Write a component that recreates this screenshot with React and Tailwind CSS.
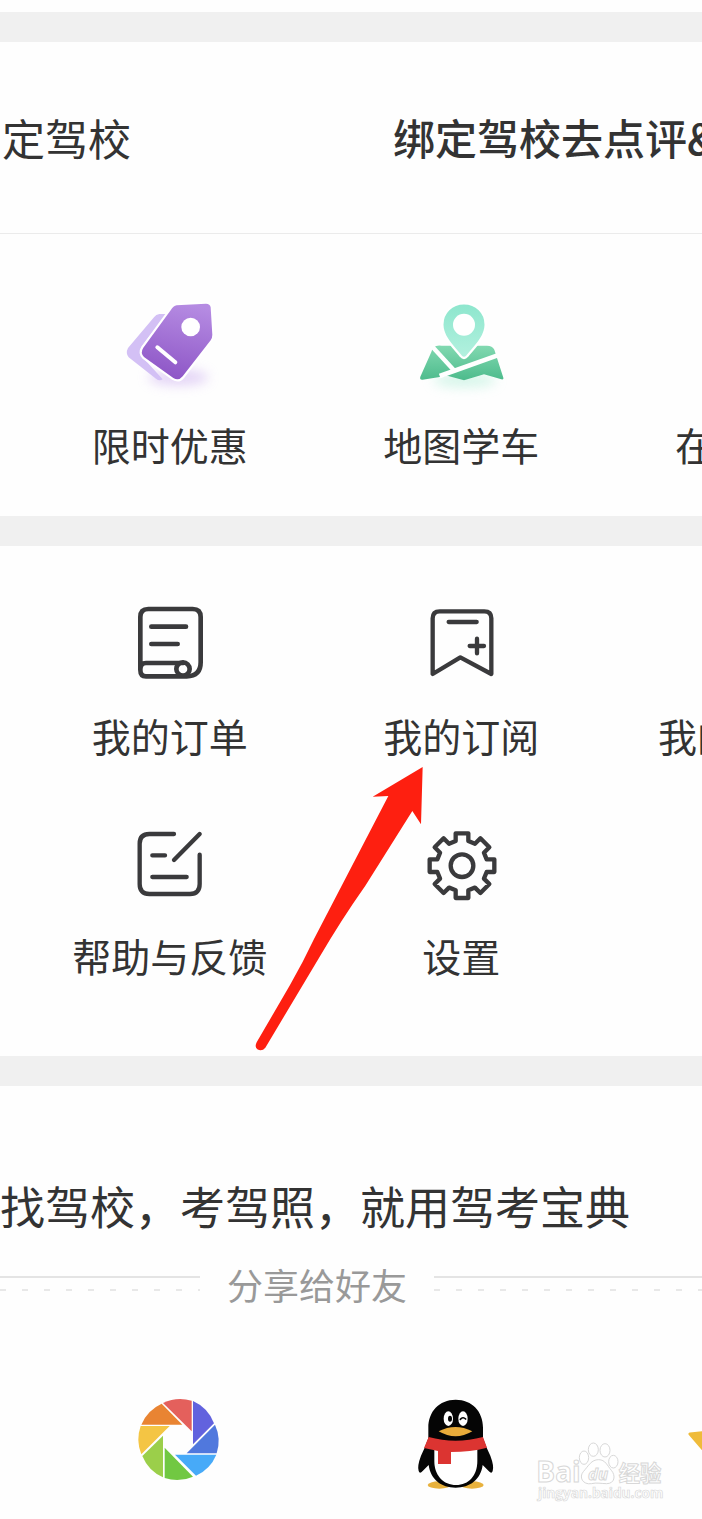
import React from 'react';

const LINE_ICON = 'h-24 w-[100px] fill-none stroke-[#3a3a3c]';

const TagIcon = () => (
  <svg viewBox="0 0 360 330" className="h-[110px] w-[120px]" aria-hidden="true">
    <defs>
      <linearGradient id="tagFill" x1="0.6" y1="0" x2="0.4" y2="1">
        <stop offset="0" stopColor="#b58be2" />
        <stop offset="1" stopColor="#8d55c6" />
      </linearGradient>
      <filter id="tagBlur" x="-50%" y="-150%" width="200%" height="400%">
        <feGaussianBlur stdDeviation="18" />
      </filter>
    </defs>
    <ellipse cx="205" cy="262" rx="90" ry="24" fill="#d5bdf2" opacity="0.65" filter="url(#tagBlur)" />
    <path d="M148 72h22L96 168q-12 18 2 34l60 66q-10 6-20-2L56 202q-10-12-2-28L132 82q6-9 16-10z" fill="#d3c0f5" />
    <path
      d="M200 46l88-5q12 0 14 11l5 82q0 9-5 17l-84 108q-12 15-28 5L102 201q-12-13-2-28l82-112q8-13 18-15z"
      fill="url(#tagFill)"
      stroke="#fff"
      strokeWidth="13"
    />
    <path
      d="M200 46l88-5q12 0 14 11l5 82q0 9-5 17l-84 108q-12 15-28 5L102 201q-12-13-2-28l82-112q8-13 18-15z"
      fill="url(#tagFill)"
    />
    <circle cx="242" cy="111" r="28" fill="#fff" />
    <path d="M142 172l54 45" stroke="#fff" strokeWidth="12" strokeLinecap="round" />
  </svg>
);

const MapIcon = () => (
  <svg viewBox="4 0 360 330" className="h-[110px] w-[120px]" aria-hidden="true">
    <defs>
      <linearGradient id="mapFill" x1="0" y1="0" x2="0" y2="1">
        <stop offset="0" stopColor="#82d9b1" />
        <stop offset="1" stopColor="#4dbb8c" />
      </linearGradient>
      <linearGradient id="pinFill" x1="0" y1="0" x2="0" y2="1">
        <stop offset="0" stopColor="#8de6cd" />
        <stop offset="1" stopColor="#b3f1df" />
      </linearGradient>
      <filter id="mapBlur" x="-50%" y="-150%" width="200%" height="400%">
        <feGaussianBlur stdDeviation="18" />
      </filter>
    </defs>
    <ellipse cx="195" cy="270" rx="95" ry="22" fill="#b5efd9" opacity="0.55" filter="url(#mapBlur)" />
    <path
      d="M102 172q10-8 24-5h136q16 0 22 12l27 84q2 7-6 5l-52-15-60 18-50-14-74 12q-10 1-7-9l33-74q3-10 7-14z"
      fill="url(#mapFill)"
    />
    <path d="M96 168l66 72" stroke="#fff" strokeWidth="13" />
    <path d="M120 258l180-64" stroke="#fff" strokeWidth="14" />
    <path
      d="M193 40c37 0 65 28 65 64 0 38-36 70-55 94q-10 12-20 0c-19-24-55-56-55-94 0-36 28-64 65-64z"
      fill="url(#pinFill)"
      stroke="#fff"
      strokeWidth="7"
    />
    <circle cx="193" cy="104" r="33" fill="#fff" />
  </svg>
);

const OrderIcon = () => (
  <svg viewBox="0 0 300 288" className={LINE_ICON} strokeWidth="14" strokeLinecap="round" aria-hidden="true">
    <path d="M61 222V66q0-24 24-24h133q24 0 24 24v136q0 42-42 42H78q-17 0-17-20 0-20 17-20h112" />
    <circle cx="189" cy="222" r="20" />
    <path d="M94 95h104M94 147h79" />
  </svg>
);

const SubscribeIcon = () => (
  <svg
    viewBox="-11 0 300 288"
    className={LINE_ICON}
    strokeWidth="13"
    strokeLinecap="round"
    strokeLinejoin="round"
    aria-hidden="true"
  >
    <path d="M54 237V70q0-21 21-21h134q21 0 21 21v167l-93-50z" />
    <path d="M102 81h84M165 153h43M187 131v44" />
  </svg>
);

const FeedbackIcon = () => (
  <svg viewBox="0 -15 300 288" className={LINE_ICON} strokeWidth="13" strokeLinecap="round" aria-hidden="true">
    <path d="M162 42H88q-29 0-29 29v121q0 30 29 30h122q29 0 29-30v-88" />
    <path d="M239 42l-77 78M97 106h38M97 171h103" />
  </svg>
);

// one tooth, turned eight times round the hub
const gearPath = () => {
  const tooth = [[-19, -74], [-19, -97], [19, -97], [19, -74]];
  const points = [];
  for (let i = 0; i < 8; i++) {
    const a = (i * Math.PI) / 4;
    tooth.forEach(([x, y]) => {
      const px = 142 + x * Math.cos(a) - y * Math.sin(a);
      const py = 137 + x * Math.sin(a) + y * Math.cos(a);
      points.push(`${px.toFixed(1)} ${py.toFixed(1)}`);
    });
  }
  return `M${points.join('L')}Z`;
};

const SettingsIcon = () => (
  <svg viewBox="-11 -15 300 288" className={LINE_ICON} strokeWidth="13" strokeLinejoin="round" aria-hidden="true">
    <path d={gearPath()} />
    <circle cx="142" cy="137" r="34" />
  </svg>
);

const MomentsIcon = () => (
  <svg viewBox="0 0 360 330" className="h-[110px] w-[120px]" aria-hidden="true">
    <path d="M132 54A119 119 0 0 1 218 47V139z" fill="#e4605c" />
    <path d="M222 48A119 119 0 0 1 285 115L222 178z" fill="#6262de" />
    <path d="M288 119A119 119 0 0 1 293 205H203z" fill="#5078dd" />
    <path d="M292 209A119 119 0 0 1 231 272L168 209z" fill="#47aaf8" />
    <path d="M222 275A119 119 0 0 1 137 279V188z" fill="#71c842" />
    <path d="M132 277A119 119 0 0 1 70 213L132 152z" fill="#9bcf4a" />
    <path d="M67 208A119 119 0 0 1 65 123H152z" fill="#f4c544" />
    <path d="M67 119A119 119 0 0 1 128 56L190 119z" fill="#e98432" />
  </svg>
);

const PenguinIcon = () => (
  <svg viewBox="-9 0 360 330" className="h-[110px] w-[120px]" aria-hidden="true">
    <ellipse cx="118" cy="300" rx="35" ry="11" fill="#e8b13c" />
    <ellipse cx="216" cy="300" rx="35" ry="11" fill="#e8b13c" />
    <path
      d="M167 44c50 0 82 36 82 84v32q8 24 22 52 12 32 7 46-3 10-12 0l-18-18c-6 44-38 68-81 68s-75-24-81-68l-18 18q-9 10-12 0-5-14 7-46 14-28 22-52v-32c0-48 32-84 82-84z"
      fill="#050505"
    />
    <path d="M103 190h129v38c0 44-26 72-64 72s-65-28-65-72z" fill="#fff" />
    <path d="M86 156q80 22 163 0l12 32q-50 13-108 13v36h-39v-39l-42-9z" fill="#dc3431" />
    <ellipse cx="145" cy="101" rx="14" ry="22" fill="#fff" />
    <ellipse cx="189" cy="101" rx="14" ry="22" fill="#fff" />
    <ellipse cx="150" cy="101" rx="6" ry="9" fill="#050505" />
    <path d="M181 103q8-9 16-1" fill="none" stroke="#050505" strokeWidth="5" strokeLinecap="round" />
    <path d="M116 139q50-26 101 0-50 30-101 0z" fill="#e8ab3a" />
  </svg>
);

const StarIcon = () => (
  <svg viewBox="0 0 120 110" className="h-[110px] w-[120px] shrink-0" aria-hidden="true">
    <path
      d="M60 4L73 35 104 47 81 68 89 101 60 84 31 101 35 70 17 49 46 46z"
      fill="#efbb3a"
      stroke="#efbb3a"
      strokeWidth="3"
      strokeLinejoin="round"
    />
  </svg>
);

const Watermark = () => (
  <svg
    viewBox="0 0 402 204"
    className="pointer-events-none absolute right-[34px] bottom-3 h-[68px] w-[134px] fill-white stroke-[#d8d8d8] font-['Open_Sans','Noto_Sans_CJK_SC',sans-serif] font-bold"
    strokeWidth="3"
  >
    <text x="7" y="128" fontSize="84">Bai</text>
    <ellipse cx="150" cy="56" rx="14" ry="20" />
    <ellipse cx="178" cy="32" rx="15" ry="20" />
    <ellipse cx="213" cy="34" rx="15" ry="20" />
    <ellipse cx="238" cy="68" rx="14" ry="19" />
    <path d="M194 62c20 0 26 18 38 32 14 16 10 40-14 40-16 0-30-4-46 0-26 4-38-20-24-36 16-18 24-36 46-36z" />
    <text x="162" y="122" fontSize="50" fontStyle="italic">du</text>
    <text x="254" y="126" fontSize="64">经验</text>
    <text x="12" y="178" fontSize="41" strokeWidth="2">jingyan.baidu.com</text>
  </svg>
);

const RedArrow = () => (
  <svg
    viewBox="0 0 600 930"
    className="pointer-events-none absolute top-[209px] left-[240px] h-[310px] w-[200px]"
    aria-hidden="true"
  >
    <path
      d="M548 36L543 208 517 168 376 392Q300 500 240 604L76 878q-10 12-24 5-9-7-2-21L150 690Q190 620 222 552L445 123 398 125z"
      fill="#fe1f10"
    />
  </svg>
);

const MenuItem = ({ icon: Icon, label }) => (
  <button type="button" className="flex flex-col items-center gap-4">
    <Icon />
    <span className="text-[39px] leading-14 whitespace-nowrap">{label}</span>
  </button>
);

const Divider = () => <div className="h-[30px] bg-[#f0f0f0]" />;

const RuleLines = () => (
  <div className="space-y-[11px] pb-0.5">
    <div className="h-[2px] bg-[#e4e4e4]" />
    <div className="h-[2px] bg-[repeating-linear-gradient(90deg,#e8e8e8_0_6px,transparent_6px_22px)]" />
  </div>
);

const App = () => {
  return (
    <div className="overflow-hidden bg-[#fefefe] pt-3 font-['Noto_Sans_CJK_SC',sans-serif] text-[#333]">
      <Divider />

      {/* School binding */}
      <header className="flex border-b border-[#ebebeb] pt-[65px] pb-[66px] leading-[60px] whitespace-nowrap">
        <p className="w-[56%] shrink-0 pl-0.5 text-[43px]">定驾校</p>
        <p className="text-[42px] font-medium">绑定驾校去点评&amp;</p>
      </header>

      <section className="grid grid-cols-[43%_43%_14%] pt-14 pb-11 pl-6">
        <MenuItem icon={TagIcon} label="限时优惠" />
        <MenuItem icon={MapIcon} label="地图学车" />
        <button type="button" className="flex items-end overflow-hidden pl-[68px] text-[39px] leading-14">
          在
        </button>
      </section>

      <Divider />

      {/* My services */}
      <section className="relative grid grid-cols-[43%_43%_14%] gap-y-[52px] pt-[49px] pb-[73px] pl-6">
        <MenuItem icon={OrderIcon} label="我的订单" />
        <MenuItem icon={SubscribeIcon} label="我的订阅" />
        <button
          type="button"
          className="flex items-end overflow-hidden pl-[51px] text-[39px] leading-14 whitespace-nowrap"
        >
          我的
        </button>
        <MenuItem icon={FeedbackIcon} label="帮助与反馈" />
        <MenuItem icon={SettingsIcon} label="设置" />
        <RedArrow />
      </section>

      <Divider />

      {/* Share */}
      <footer className="relative pt-[88px] pb-6">
        <p className="text-[45px] leading-16 whitespace-nowrap">找驾校，考驾照，就用驾考宝典</p>
        <div className="mt-5 grid grid-cols-[200px_auto_1fr] items-center gap-[27px]">
          <RuleLines />
          <span className="text-4xl leading-[52px] text-[#999]">分享给好友</span>
          <RuleLines />
        </div>
        <div className="mt-[75px] grid grid-cols-[42%_42%_16%] pl-10">
          <button type="button" className="flex justify-center" aria-label="朋友圈">
            <MomentsIcon />
          </button>
          <button type="button" className="flex justify-center" aria-label="QQ">
            <PenguinIcon />
          </button>
          <button type="button" className="flex overflow-hidden pl-[77px]" aria-label="QQ空间">
            <StarIcon />
          </button>
        </div>
        <Watermark />
      </footer>
    </div>
  );
};

export default App;
